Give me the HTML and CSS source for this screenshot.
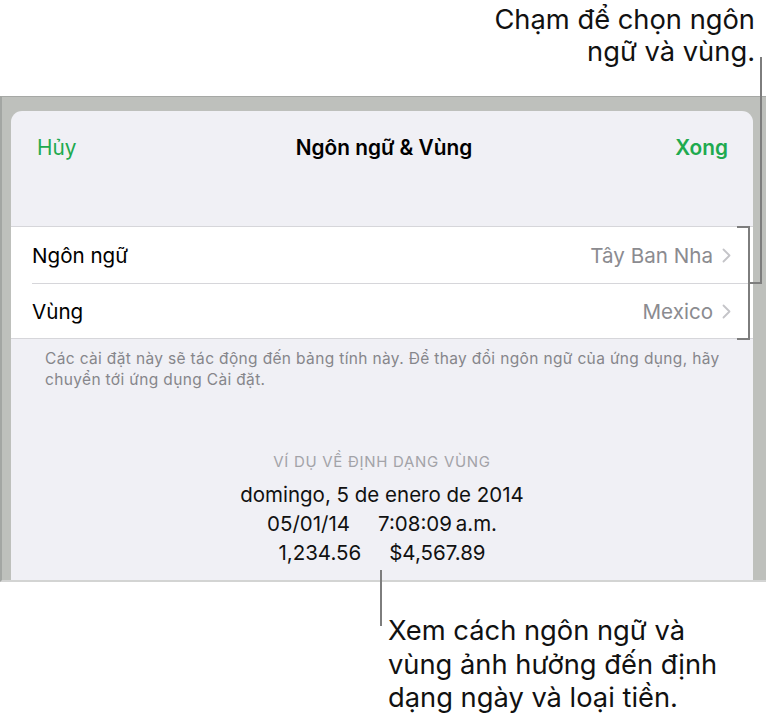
FILE: index.html
```html
<!DOCTYPE html>
<html lang="vi">
<head>
<meta charset="utf-8">
<title>Ngôn ngữ &amp; Vùng</title>
<link rel="stylesheet" href="styles.css">
</head>
<body>
<div class="page">
  <div class="callout-top">
    <p>Chạm để chọn ngôn<br>ngữ và vùng.</p>
  </div>
  <div class="frame">
    <div class="card">
      <div class="navbar">
        <span class="nav-btn">Hủy</span>
        <span class="nav-title">Ngôn ngữ &amp; Vùng</span>
        <span class="nav-btn nav-done">Xong</span>
      </div>
      <div class="group">
        <div class="row">
          <span class="row-label">Ngôn ngữ</span>
          <span class="row-value">Tây Ban Nha
            <svg class="chev" width="9" height="15" viewBox="0 0 9 15"><polyline points="1.5,1.5 7.5,7.5 1.5,13.5" fill="none" stroke="#c4c4c8" stroke-width="1.8" stroke-linecap="round" stroke-linejoin="round"/></svg>
          </span>
        </div>
        <div class="row">
          <span class="row-label">Vùng</span>
          <span class="row-value">Mexico
            <svg class="chev" width="9" height="15" viewBox="0 0 9 15"><polyline points="1.5,1.5 7.5,7.5 1.5,13.5" fill="none" stroke="#c4c4c8" stroke-width="1.8" stroke-linecap="round" stroke-linejoin="round"/></svg>
          </span>
        </div>
      </div>
      <p class="footnote">Các cài đặt này sẽ tác động đến bảng tính này. Để thay đổi ngôn ngữ của ứng dụng, hãy chuyển tới ứng dụng Cài đặt.</p>
      <div class="example">
        <div class="example-title">VÍ DỤ VỀ ĐỊNH DẠNG VÙNG</div>
        <div class="example-line">domingo, 5 de enero de 2014</div>
        <div class="example-line"><span class="gap">05/01/14</span>7:08:09&#8201;a.m.</div>
        <div class="example-line"><span class="gap">1,234.56</span>$4,567.89</div>
      </div>
    </div>
  </div>
  <div class="callout-bottom">
    <p>Xem cách ngôn ngữ và<br>vùng ảnh hưởng đến định<br>dạng ngày và loại tiền.</p>
  </div>
  <svg class="leaders" width="766" height="721" viewBox="0 0 766 721">
    <g fill="none" stroke="#7d7d7d" stroke-width="2">
      <polyline points="761,57 761,283 749,283"/>
      <polyline points="737,227 749,227 749,339 737,339"/>
      <line x1="381" y1="570" x2="381" y2="626"/>
    </g>
  </svg>
</div>
</body>
</html>
```

FILE: styles.css
```css
* { box-sizing: border-box; }
html, body { margin: 0; padding: 0; background: #ffffff; }
body {
  font-family: Inter, Roboto, "Noto Sans", "DejaVu Sans", sans-serif;
  color: #000;
}
.page {
  position: relative;
  width: 766px;
  height: 721px;
  overflow: hidden;
}
.callout-top {
  height: 96px;
  display: flex;
  justify-content: flex-end;
  padding-right: 11px;
}
.callout-top p,
.callout-bottom p {
  margin: 0;
  font-size: 27.3px;
  color: #111;
}
.callout-top p {
  text-align: right;
  line-height: 32px;
  padding-top: 4px;
}
.callout-bottom p {
  line-height: 33.5px;
}
.frame {
  height: 486px;
  background: #bec0bc;
  border-top: 1px solid #a6a8a5;
  border-left: 2px solid #a3a6a3;
  border-bottom: 2px solid #d3d4d3;
  padding: 14px 13px 0 9px;
  display: flex;
}
.card {
  flex: 1;
  background: #f0f0f5;
  border-radius: 11px 11px 0 0;
  display: flex;
  flex-direction: column;
}
.navbar {
  height: 72px;
  display: grid;
  grid-template-columns: 1fr auto 1fr;
  align-items: center;
  padding: 0 25px 0 26px;
}
.nav-btn {
  font-size: 20.8px;
  color: #1eaa4f;
}
.nav-done { font-weight: 600; justify-self: end; }
.nav-title {
  font-size: 20.8px;
  font-weight: 600;
  color: #000;
  margin-left: 3px;
}
.group {
  margin-top: 43px;
  background: #fff;
  border-top: 1px solid #d6d6da;
  border-bottom: 1px solid #d6d6da;
  padding-left: 21px;
}
.row {
  height: 56px;
  display: flex;
  align-items: center;
  justify-content: space-between;
  padding-right: 22px;
  font-size: 20.6px;
}
.row + .row { border-top: 1px solid #d6d6da; height: 55px; }
.row-label { color: #000; }
.row-value {
  color: #8b8b90;
  display: flex;
  align-items: center;
  gap: 9px;
}
.chev { display: block; }
.footnote {
  margin: 9px 0 0 0;
  padding: 0 14px 0 34px;
  font-size: 15.5px;
  letter-spacing: 0.35px;
  line-height: 21px;
  color: #86868b;
}
.example {
  margin-top: 62px;
  display: flex;
  flex-direction: column;
  align-items: center;
}
.example-title {
  font-size: 15px;
  line-height: 20px;
  letter-spacing: 0.7px;
  color: #a3a3a8;
  margin-bottom: 8px;
}
.example-line {
  font-size: 20.5px;
  line-height: 29px;
  color: #111;
}
.gap { margin-right: 28px; }
.callout-bottom {
  padding: 32px 0 0 388px;
}
.leaders {
  position: absolute;
  left: 0;
  top: 0;
  pointer-events: none;
}
```
